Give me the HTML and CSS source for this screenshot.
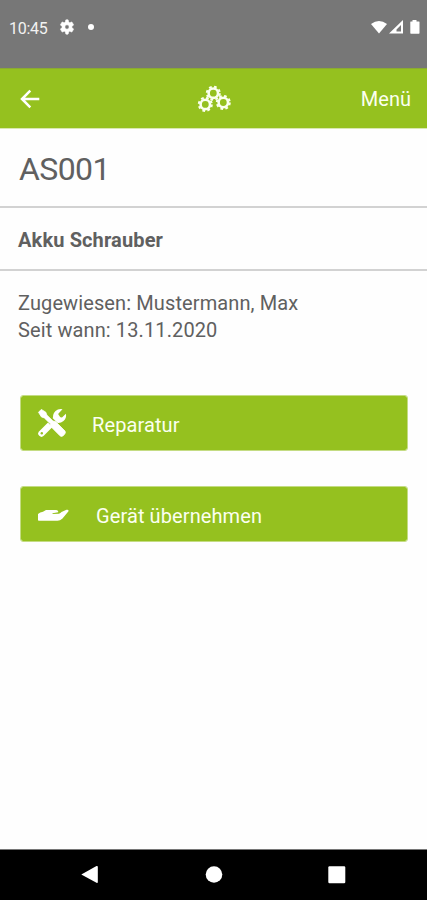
FILE: index.html
```html
<!DOCTYPE html>
<html lang="de">
<head>
<meta charset="utf-8">
<title>AS001</title>
<link rel="stylesheet" href="styles.css">
</head>
<body>
<div class="screen">
  <div class="status">
    <span class="time">10:45</span>
    <svg class="cog" width="16" height="16" viewBox="0 0 24 24"><path fill="#fff" stroke="#fff" stroke-width=".8" fill-rule="evenodd" d="M19.4 13a7.800 7.800 0 0 0 0-2l2.300-1.800c.2-.2.300-.4.100-.7l-2.200-3.800c-.1-.2-.4-.3-.7-.2l-2.700 1.100a8 8 0 0 0-1.800-1L14 1.700c0-.3-.3-.5-.5-.5h-3c-.3 0-.5.200-.5.500l-.4 2.900a8 8 0 0 0-1.800 1L5.100 4.500c-.3-.1-.6 0-.7.200L2.200 8.500c-.2.300-.1.500.1.700L4.600 11a7.800 7.800 0 0 0 0 2l-2.300 1.800c-.2.200-.3.400-.1.700l2.200 3.800c.1.200.4.300.7.200l2.700-1.100a8 8 0 0 0 1.800 1l.4 2.900c0 .3.200.5.500.5h3c.2 0 .5-.2.500-.5l.4-2.900a8 8 0 0 0 1.800-1l2.700 1.100c.3.100.6 0 .7-.2l2.200-3.800c.2-.3.100-.5-.1-.7zM12 15.200a3.200 3.200 0 1 1 0-6.400 3.200 3.200 0 0 1 0 6.400z"/></svg>
    <span class="dot"></span>
    <svg class="signals" width="50" height="18" viewBox="0 0 50 18"><path fill="#fff" d="M1 5Q9 -1 17 5L9 14.500z"/><path fill="#fff" fill-rule="evenodd" d="M19 14.500 33 1V14.500zM26.500 12.500V10.500L31 6V12.500z"/><path fill="#fff" d="M42.500 1h4v1.500H49q.5 0 .5.600V14q0 .7-.6.700h-8q-.6 0-.6-.7V3.100q0-.6.500-.6h1.700z"/></svg>
  </div>
  <header class="bar">
    <svg class="back" width="20" height="20" viewBox="0 0 20 20"><path d="M19.300 10H2.500M10.300 1.700 2 10l8.300 8.300" fill="none" stroke="#fff" stroke-width="2.500"/></svg>
    <svg class="gears" width="34" height="28" viewBox="0 0 34 28">
      <g fill="none" stroke="#fbfff0">
        <g transform="translate(16.300 8.200)"><circle r="4.700" stroke-width="2.600"/><circle r="6.500" stroke-width="2" stroke-dasharray="2.700 2.405"/></g>
        <g transform="translate(8.300 19.400)"><circle r="4.700" stroke-width="2.600"/><circle r="6.500" stroke-width="2" stroke-dasharray="2.700 2.405"/></g>
        <g transform="translate(26.300 17.500)"><circle r="4.700" stroke-width="2.600"/><circle r="6.500" stroke-width="2" stroke-dasharray="2.700 2.405"/></g>
      </g>
    </svg>
    <span class="menu">Menü</span>
  </header>
  <main>
    <h1>AS001</h1>
    <h2>Akku Schrauber</h2>
    <div class="info"><p>Zugewiesen: Mustermann, Max</p><p>Seit wann: 13.11.2020</p></div>
    <div class="actions">
      <div class="action">
        <svg width="32" height="32" viewBox="0 0 32 32"><g transform="translate(-1 0)"><path d="M5.500 26.500 21 11" stroke="#fff" stroke-width="6.400" stroke-linecap="round"/><path fill="#fff" d="M17.500 14Q15.700 7.500 19.500 4 22.500 1.300 26.500 2.200L22.300 6.700 22.800 9.900 26 10.500 29.900 6.700Q30.800 11 27.500 14 24 16.900 19.500 15.500z"/><circle cx="5.800" cy="26.300" r="1.200" fill="#95c11f"/><path d="M8 7 24 23" stroke="#95c11f" stroke-width="6.500"/><path fill="#fff" stroke="#fff" stroke-width=".8" stroke-linejoin="round" d="M5.300 2.400 9.800 5.200 10.800 8 17 14.100 19.500 14.500 29 24Q30 25.800 28.500 27.300L26.800 29Q25.500 30 24 28.800L14.800 19.500 14.300 16.800 8.300 10.900 5.400 9.900 2.500 5.300z"/></g></svg>
        <span class="repair">Reparatur</span>
      </div>
      <div class="action">
        <svg width="32" height="32" viewBox="0 0 32 32"><path fill="#fff" d="M1 16Q3 14 6 13.700L9 12H19Q21.500 12.200 21.200 14.300L15.500 15.300V15.900L22 15.700Q23.500 15.200 24.500 14L29.500 11.800Q32 11.500 31.500 13.200L25.500 20.500Q23 22.800 20.500 22.800H1.800Q1 22.800 1 22z"/></svg>
        <span class="take">Gerät übernehmen</span>
      </div>
    </div>
  </main>
  <nav class="nav">
    <svg width="300" height="30" viewBox="0 0 300 30"><g fill="#fff"><path d="M21.300 16.500 36.500 8Q37.800 7.500 37.800 9V24Q37.800 25.500 36.500 24.800z"/><circle cx="154" cy="16.500" r="8.300"/><rect x="268.300" y="8.200" width="17" height="17" rx="1.200"/></g></svg>
  </nav>
</div>
</body>
</html>
```
FILE: styles.css
```css
* { box-sizing: border-box; }
body { margin: 0; font-family: Roboto, sans-serif; background: #fefefe; color: #606060; }
h1, h2, p { margin: 0; white-space: nowrap; }
svg { display: block; flex: none; }
.screen { width: 427px; height: 900px; display: flex; flex-direction: column; overflow: hidden; }
.status { height: 68px; flex: none; background: #777; color: #fff; display: flex; align-items: flex-start; padding: 19px 7px 0 9px; }
.time { width: 50px; font-size: 16px; line-height: 19px; letter-spacing: -.25px; color: #f2f2f2; }
.dot { width: 6px; height: 6px; border-radius: 50%; background: #fff; margin: 5px 0 0 13px; }
.signals { margin-left: auto; }
.bar { height: 60px; flex: none; background: #95c11f; display: flex; align-items: center; padding: 0 16px 0 20px; border-top: 1px solid #8baa31; box-shadow: 0 1px #d9e8b2; color: #fff; }
.gears { margin-left: 157px; }
.menu { margin-left: auto; font-size: 20px; line-height: 24px; padding-top: 1px; color: #fbfff0; }
main { flex: 1; }
h1 { height: 80px; padding: 22px 19px 0; font-size: 32px; line-height: 38px; font-weight: 400; letter-spacing: -.6px; border-bottom: 2px solid #d2d2d2; }
h2 { height: 63px; padding: 20px 18px 0; font-size: 20px; line-height: 24px; font-weight: 700; letter-spacing: .13px; border-bottom: 2px solid #d2d2d2; }
.info { padding: 19px 18px 0; font-size: 20px; line-height: 27px; letter-spacing: .11px; }
.actions { display: flex; flex-direction: column; gap: 37px; padding: 52px 20px 0 21px; }
.action { height: 54px; background: #95c11f; border-radius: 2px; outline: 1px solid #c4dc83; display: flex; align-items: center; padding-left: 16px; color: #fbfff0; font-size: 20px; line-height: 24px; letter-spacing: .1px; }
.repair { margin: 3px 0 0 23px; }
.take { margin: 3px 0 0 27px; }
.nav { height: 51px; flex: none; background: #000; border-top: 1px solid #777; padding: 8px 0 0 60px; }
```
